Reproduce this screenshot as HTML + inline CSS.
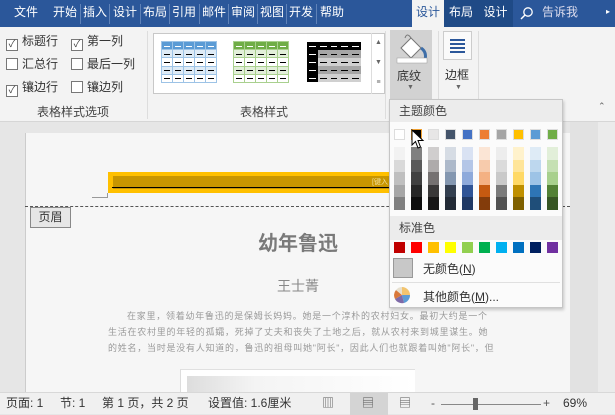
<!DOCTYPE html>
<html><head><meta charset="utf-8">
<style>
*{margin:0;padding:0;box-sizing:border-box}
body{width:615px;height:414px;overflow:hidden;position:relative;background:#e6e6e6;font-family:"Liberation Sans","Noto Sans CJK SC",sans-serif;}
.abs{position:absolute}
#tabs{left:0;top:0;width:615px;height:27px;background:#2b579a;}
.tab{position:absolute;top:0;height:27px;line-height:24px;color:#fff;font-size:12px;text-align:center}
.sep{position:absolute;top:4px;width:1px;height:20px;background:#5f82b8}
#ribbon{left:0;top:27px;width:615px;height:95px;background:#f3f3f3;border-bottom:1px solid #d6d6d6}
.cb{position:absolute;font-size:12px;color:#333;line-height:14px}
.cb i{display:inline-block;width:12px;height:12px;border:1px solid #777;background:#fff;vertical-align:-2px;margin-right:4px;position:relative;font-style:normal;font-size:10px;line-height:10px;text-align:center;color:#444}
.gl{position:absolute;top:103px;font-size:12px;color:#444}
.thumb{position:absolute;top:41px;width:56px;height:42px;display:grid;grid-template-columns:repeat(5,1fr);grid-template-rows:repeat(5,1fr);gap:1px;padding:1px}
.thumb span{position:relative}
.thumb span:after{content:"";position:absolute;left:2px;right:2px;top:50%;height:1px;background:#000}
.thumb span.w:after{background:#fff}
#menu{left:389px;top:99px;width:174px;height:209px;background:#fbfbfb;border:1px solid #c6c6c6;box-shadow:1px 2px 3px rgba(0,0,0,.2)}
.hd{position:absolute;left:0;width:172px;height:22px;background:#ececec;font-size:12px;color:#444;line-height:22px;padding-left:9px}
.sw{position:absolute;width:11px;height:11px}
.col{position:absolute;width:11px;top:47px}
.col b{display:block;height:12.6px}
.page{left:25px;top:133px;width:545px;height:262px;background:#f6f6f6;border-left:1px solid #ccc}
#status{left:0;top:392px;width:615px;height:22px;background:#f0f0f0;border-top:1px solid #d8d8d8;font-size:12px;color:#333;line-height:21px}
.p{position:absolute;left:108px;font-size:9px;color:#9a9a9a;white-space:nowrap;letter-spacing:0.75px}
</style></head><body>
<div id="tabs" class="abs">
<div class="tab" style="left:6px;width:40px">文件</div>
<div class="tab" style="left:52px;width:26px">开始</div><div class="sep" style="left:80px"></div>
<div class="tab" style="left:82px;width:26px">插入</div><div class="sep" style="left:109px"></div>
<div class="tab" style="left:111px;width:28px">设计</div><div class="sep" style="left:140px"></div>
<div class="tab" style="left:141px;width:28px">布局</div><div class="sep" style="left:169px"></div>
<div class="tab" style="left:170px;width:28px">引用</div><div class="sep" style="left:199px"></div>
<div class="tab" style="left:200px;width:28px">邮件</div><div class="sep" style="left:228px"></div>
<div class="tab" style="left:229px;width:28px">审阅</div><div class="sep" style="left:257px"></div>
<div class="tab" style="left:258px;width:28px">视图</div><div class="sep" style="left:286px"></div>
<div class="tab" style="left:287px;width:28px;overflow:hidden">开发工</div><div class="sep" style="left:316px"></div>
<div class="tab" style="left:317px;width:30px">帮助</div>
<div class="tab" style="left:412px;width:32px;background:#f3f3f3;color:#2b579a;height:28px">设计</div>
<div class="tab" style="left:444px;width:34px;background:#1f4a86">布局</div>
<div class="tab" style="left:478px;width:35px;background:#1f4a86">设计</div>
<div class="tab" style="left:514px;width:80px;text-align:left;color:#dde">
<svg width="14" height="14" style="position:absolute;left:6px;top:6px"><circle cx="8" cy="6" r="4.2" fill="none" stroke="#fff" stroke-width="1.3"/><line x1="5" y1="9" x2="1" y2="13" stroke="#fff" stroke-width="1.5"/></svg>
<span style="position:absolute;left:28px">告诉我</span></div>
<div class="tab" style="left:603px;width:10px;font-size:8px">▸</div>
</div>
<div id="ribbon" class="abs">
<div class="cb" style="left:6px;top:7px"><i>✓</i>标题行</div>
<div class="cb" style="left:71px;top:7px"><i>✓</i>第一列</div>
<div class="cb" style="left:6px;top:30px"><i></i>汇总行</div>
<div class="cb" style="left:71px;top:30px"><i></i>最后一列</div>
<div class="cb" style="left:6px;top:53px"><i>✓</i>镶边行</div>
<div class="cb" style="left:71px;top:53px"><i></i>镶边列</div>
<div class="abs" style="left:147px;top:4px;width:1px;height:88px;background:#ddd"></div>
<div class="abs" style="left:153px;top:6px;width:232px;height:61px;border:1px solid #c8c8c8;background:#fff"></div>
<div class="abs" style="left:371px;top:6px;width:14px;height:61px;border-left:1px solid #ddd;font-size:7px;color:#666;text-align:center;line-height:20px">▲<br>▼<br>≡</div>
<div class="gl" style="left:37px;top:76px">表格样式选项</div>
<div class="gl" style="left:240px;top:76px">表格样式</div>
<div class="abs" style="left:385px;top:4px;width:1px;height:88px;background:#ddd"></div>
<div class="abs" style="left:390px;top:3px;width:42px;height:71px;background:#d2d2d2"></div>
<svg class="abs" style="left:395px;top:5px" width="34" height="32"><path d="M6 16 L16 6 L26 16 L16 26 Z" fill="#fff" stroke="#777"/><path d="M10 6 Q12 0 16 6" fill="none" stroke="#777"/><path d="M26 16 Q32 20 30 28" fill="none" stroke="#3e6ea8" stroke-width="3"/><rect x="2" y="26" width="30" height="5" fill="#fff" stroke="#999" stroke-width=".5"/></svg>
<div class="abs" style="left:397px;top:40px;font-size:12px;color:#333">底纹</div>
<div class="abs" style="left:407px;top:57px;font-size:7px;color:#666">▼</div>
<div class="abs" style="left:438px;top:4px;width:1px;height:88px;background:#ddd"></div>
<div class="abs" style="left:443px;top:4px;width:29px;height:29px;border:1px solid #ccc;background:#fafafa"></div>
<div class="abs" style="left:450px;top:12px;width:15px;height:2px;background:#2b579a;box-shadow:0 4px 0 #2b579a,0 8px 0 #2b579a,0 12px 0 #2b579a"></div>
<div class="abs" style="left:445px;top:39px;font-size:12px;color:#333">边框</div>
<div class="abs" style="left:455px;top:57px;font-size:7px;color:#666">▼</div>
<div class="abs" style="left:478px;top:4px;width:1px;height:88px;background:#ddd"></div>
<div class="abs" style="left:598px;top:74px;font-size:9px;color:#666">⌃</div>
</div>
<div class="thumb abs" style="left:161px;background:#9dc3e6;" id="t1"></div>
<div class="thumb abs" style="left:233px;background:#a9d08e;" id="t2"></div>
<div class="thumb abs" style="left:306px;background:#fff;gap:0" id="t3"></div>

<div class="page abs"></div>
<div class="abs" style="left:570px;top:122px;width:28px;height:270px;background:#e2e2e2"></div>
<div class="abs" style="left:598px;top:122px;width:17px;height:270px;background:#ebebeb"></div>
<div class="abs" style="left:108px;top:172px;width:290px;height:21px;background:#ffc000"></div>
<div class="abs" style="left:113px;top:176px;width:285px;height:13px;background:#c89600"></div>
<div class="abs" style="left:112px;top:187px;width:286px;height:1px;background:#000"></div>
<div class="abs" style="left:372px;top:177px;font-size:7px;color:#f0e0a0">[键入</div>
<div class="abs" style="left:92px;top:197px;width:16px;height:1px;background:#999"></div>
<div class="abs" style="left:107px;top:193px;width:1px;height:5px;background:#999"></div>
<div class="abs" style="left:25px;top:206px;width:545px;border-top:1px dashed #555"></div>
<div class="abs" style="left:30px;top:207px;width:41px;height:21px;border:1px solid #888;background:#e6e6e6;font-size:12px;line-height:19px;text-align:center;color:#333">页眉</div>
<div class="abs" style="left:258px;top:227px;font-size:20px;font-weight:bold;color:#7a7a7a">幼年鲁迅</div>
<div class="abs" style="left:277px;top:276px;font-size:14px;color:#888">王士菁</div>
<div class="p" style="left:127px;top:309px">在家里，领着幼年鲁迅的是保姆长妈妈。她是一个淳朴的农村妇女。最初大约是一个</div>
<div class="p" style="top:325px">生活在农村里的年轻的孤孀，死掉了丈夫和丧失了土地之后，就从农村来到城里谋生。她</div>
<div class="p" style="top:341px">的姓名，当时是没有人知道的，鲁迅的祖母叫她"阿长"，因此人们也就跟着叫她"阿长"，但</div>
<div class="abs" style="left:180px;top:369px;width:235px;height:23px;background:#fff;border-left:1px solid #ddd;border-top:1px solid #e0e0e0"></div>
<div class="abs" style="left:187px;top:376px;width:228px;height:16px;background:linear-gradient(90deg,#ddd,#f4f4f4 30%,#fff)"></div>

<div id="menu" class="abs">
<div class="hd" style="top:0">主题颜色</div>
<div class="hd" style="top:116px;height:24px;line-height:24px">标准色</div>
<div id="sw"></div>
<div class="abs" style="left:3px;top:158px;width:20px;height:20px;border:1px solid #999;background:#c8c8c8"></div>
<div class="abs" style="left:33px;top:160px;font-size:12px;color:#333">无颜色(<u>N</u>)</div>
<div class="abs" style="left:2px;top:182px;width:168px;height:1px;background:#e0e0e0"></div>
<svg class="abs" style="left:3px;top:186px" width="18" height="18"><path d="M9 9 L9 1 A8 8 0 0 1 17 9Z" fill="#f2c46f"/><path d="M9 9 L17 9 A8 8 0 0 1 11 17Z" fill="#5b9bd5"/><path d="M9 9 L11 17 A8 8 0 0 1 2 13Z" fill="#7e6aa8"/><path d="M9 9 L2 13 A8 8 0 0 1 3 4Z" fill="#d9783a"/><path d="M9 9 L3 4 A8 8 0 0 1 9 1Z" fill="#e7e0cf"/></svg>
<div class="abs" style="left:33px;top:188px;font-size:12px;color:#333">其他颜色(<u>M</u>)...</div>
</div>
<svg class="abs" style="left:411px;top:129px" width="14" height="22"><path d="M1 1 L1 16 L4.5 12.5 L7 19 L9.5 18 L7 11.5 L12 11.5 Z" fill="#fff" stroke="#000" stroke-width="1"/></svg>

<div id="status" class="abs">
<span class="abs" style="left:6px">页面: 1</span>
<span class="abs" style="left:60px">节: 1</span>
<span class="abs" style="left:102px">第 1 页，共 2 页</span>
<span class="abs" style="left:208px">设置值: 1.6厘米</span>
<span class="abs" style="left:322px;color:#555">▥</span>
<div class="abs" style="left:350px;top:0;width:38px;height:22px;background:#d4d4d4"></div>
<span class="abs" style="left:362px;color:#555">▤</span>
<span class="abs" style="left:399px;color:#555">▤</span>
<span class="abs" style="left:431px;color:#555">-</span>
<div class="abs" style="left:441px;top:11px;width:100px;height:1px;background:#888"></div>
<div class="abs" style="left:473px;top:5px;width:5px;height:12px;background:#666"></div>
<span class="abs" style="left:543px;color:#555">+</span>
<span class="abs" style="left:563px">69%</span>
</div>
<script>
(function(){
var tc=["#ffffff","#000000","#e7e6e6","#44546a","#4472c4","#ed7d31","#a5a5a5","#ffc000","#5b9bd5","#70ad47"];
var sh=[["#f2f2f2","#d9d9d9","#bfbfbf","#a6a6a6","#808080"],["#808080","#595959","#404040","#262626","#0d0d0d"],["#d0cece","#aeabab","#757171","#3a3838","#171616"],["#d6dce4","#adb9ca","#8497b0","#333f4f","#222a35"],["#d9e2f3","#b4c6e7","#8eaadb","#2f5496","#1f3864"],["#fbe5d5","#f7cbac","#f4b183","#c55a11","#833c0b"],["#ededed","#dbdbdb","#c9c9c9","#7b7b7b","#525252"],["#fff2cc","#ffe599","#ffd966","#bf8f00","#7f6000"],["#deebf6","#bdd7ee","#9dc3e6","#2e75b5","#1f4e79"],["#e2efd9","#c5e0b3","#a8d08d","#538135","#375623"]];
var st=["#c00000","#ff0000","#ffc000","#ffff00","#92d050","#00b050","#00b0f0","#0070c0","#002060","#7030a0"];
var h="";
for(var i=0;i<10;i++){var x=4+i*17;
h+='<div class="sw" style="left:'+x+'px;top:29px;background:'+tc[i]+';border:1px solid '+(i==1?'#f0a030':'#ddd')+'"></div>';
h+='<div class="col" style="left:'+x+'px">';for(var j=0;j<5;j++)h+='<b style="background:'+sh[i][j]+'"></b>';h+='</div>';
h+='<div class="sw" style="left:'+x+'px;top:142px;background:'+st[i]+'"></div>';}
document.getElementById("sw").innerHTML=h;
function th(id,hd,a,b,c3){var e=document.getElementById(id),s="";for(var r=0;r<5;r++)for(var c=0;c<5;c++){var bg=r==0?hd:(c3?(c==0?"#000":(r%2?"#a6a6a6":"#d0d0d0")):(r%2?a:b));var w=(r==0||(c3&&c==0))?' class="w"':'';s+='<span'+w+' style="background:'+bg+'"></span>';}e.innerHTML=s;}
th("t1","#5b9bd5","#deebf6","#fff");th("t2","#70ad47","#e2efd9","#fff");th("t3","#000","","",1);
})();
</script>
</body></html>
